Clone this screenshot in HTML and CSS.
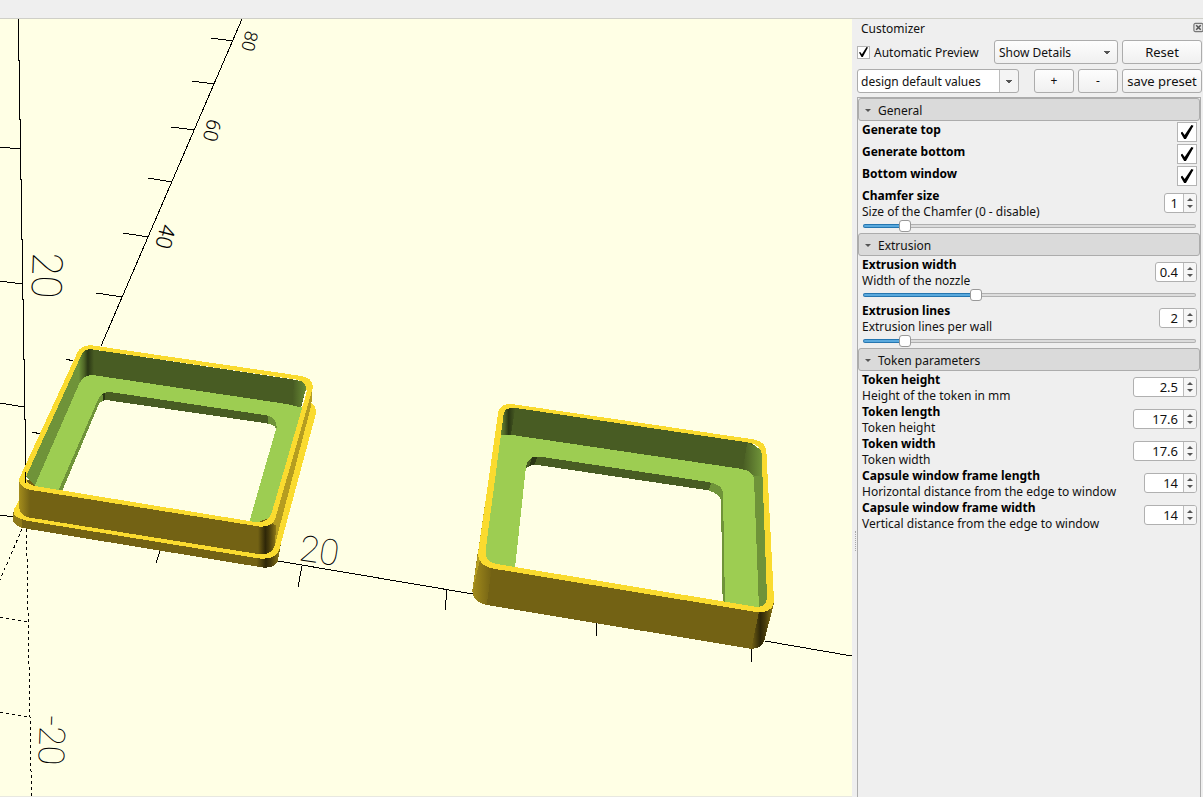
FILE: index.html
```html
<!DOCTYPE html>
<html lang="en">
<head>
<meta charset="utf-8">
<title>Customizer</title>
<link rel="stylesheet" href="styles.css">
</head>
<body>
<div class="toolbar"></div>
<div class="workspace">
  <main class="viewport">
    <svg class="scene" viewBox="0 19 852 778" preserveAspectRatio="xMinYMin slice" role="img" aria-label="3D preview">
      <defs>
        <linearGradient id="backL"><stop offset="0" stop-color="#6f9339"/><stop offset=".35" stop-color="#4f6627"/><stop offset=".6" stop-color="#2a3614"/><stop offset="1" stop-color="#485c23"/></linearGradient>
        <linearGradient id="backR"><stop offset="0" stop-color="#485c23"/><stop offset="1" stop-color="#6f9339"/></linearGradient>
        <linearGradient id="frontL"><stop offset="0" stop-color="#a38c1c"/><stop offset="1" stop-color="#736214"/></linearGradient>
        <linearGradient id="frontR"><stop offset="0" stop-color="#736214"/><stop offset=".4" stop-color="#2e2708"/><stop offset=".6" stop-color="#463b0c"/><stop offset="1" stop-color="#8f7a18"/></linearGradient>
      </defs>

      <g class="axes">
        <path d="M18.500 19V60L19.500 61V119L20.500 120V179L21.500 180V239L22.500 240V299L23.500 300V359L24.500 360V419L25.500 420V482"/>
        <path d="M242 19L101 346M278 561L473 594M765 641L852 656"/>
        <path d="M0 147L20 149M0 281L22 284M0 403L24 407M0 515L13 517"/>
        <path d="M211 38L233 41M192 81L214 84M171 127L195 130M148 178L172 182M123 233L148 237M96 293L122 297M66 359L73 361M32 432L41 434"/>
        <path d="M160 551L156 563M302 566L298 587M447 590L445 610M596.500 623V636M751.500 648V662"/>
        <path class="dashed" d="M26.500 529L31.500 797M22 529L0 580M0 617L27 622M0 712L29 717"/>
      </g>
      <g class="ticks">
        <text font-size="36" transform="translate(298 560) rotate(9)">20</text>
        <text font-size="42" transform="translate(33 252) rotate(92)">20</text>
        <text font-size="36" transform="translate(40 715) rotate(92)">-20</text>
        <text class="far" font-size="22" transform="translate(161 223) rotate(104)">40</text>
        <text class="far" font-size="20" transform="translate(208 118) rotate(104)">60</text>
        <text class="far" font-size="18" transform="translate(246 30) rotate(104)">80</text>
      </g>

      <!-- capsule top -->
      <g transform="translate(0 330) scale(.33333)" shape-rendering="crispEdges">
        <path fill="#736214" d="M40 545V575Q52 592 85 597L785 712Q822 717 833 695L845 630L800 300L100 500Z"/>
        <path fill="#8f7a18" d="M40 550V575Q48 588 66 594V562Z"/>
        <path fill="url(#frontR)" d="M770 684L839 655L833 695Q822 717 785 712L770 710Z"/>
        <path fill="#fadb2f" d="M60 505L42 538Q34 562 80 572L775 685Q828 692 839 655L948 250Q948 225 932 218L850 260L100 480Z"/>
        <path fill="#736214" d="M58 455V535Q62 558 90 563L780 673Q816 675 822 645L826 570L800 300Z"/>
        <path fill="url(#frontL)" d="M58 455V535Q62 558 90 563V465Z"/>
        <path fill="#b59d20" d="M820 570L938 165L934 225L824 648Z"/>
        <path fill="url(#frontR)" d="M774 585H829L824 648Q816 676 774 672Z"/>
        <path fill="#6f9339" d="M240 75L78 440L105 468L290 140V60Z"/>
        <path fill="#485c23" d="M250 57L275 58L890 150L922 160L903 235L285 140L245 150Z"/>
        <path fill="url(#backL)" d="M236 85L254 57H282V142L236 154Z"/>
        <path fill="url(#backR)" d="M882 149L925 158L900 235L878 226Z"/>
        <path fill="#9dcd52" d="M236 165Q250 131 285 136L860 222L907 233L818 560L765 580L102 472Z"/>
        <path fill="#485c23" d="M288 225Q300 183 330 186L800 256Q834 264 829 297L800 290L320 225Z"/>
        <path fill="#2a3614" d="M305 195L316 187V211L305 213Z"/>
        <path fill="#6f9339" d="M298 200L176 480L190 484L310 210V192ZM804 257Q834 264 829 300L804 284Z"/>
        <path fill="#ffffe5" d="M294 228Q304 207 325 211L800 280Q828 286 828 297L748 575L187 482Z"/>
        <path fill="#fadb2f" fill-rule="evenodd" d="M232 68Q244 44 275 46L905 138Q942 146 938 175L827 562Q818 592 780 590L100 481Q54 474 58 445ZM244 76L79 438Q76 462 105 468L765 576Q808 580 816 545L919 190Q925 156 890 149L275 58Q252 56 244 76Z"/>
      </g>
      <path d="M25.500 472V483" stroke="#000"/>

      <!-- capsule bottom -->
      <g transform="translate(460 390) scale(.33333)" shape-rendering="crispEdges">
        <path fill="#736214" d="M53 490L37 600Q38 637 80 645L870 776Q900 778 912 755L942 640L500 500Z"/>
        <path fill="url(#frontL)" d="M53 490L37 600Q38 637 80 645L96 530Z"/>
        <path fill="#b59d20" d="M115 65L53 495L37 605L60 510Z"/>
        <path fill="url(#frontR)" d="M898 660L874 776Q900 778 912 755L942 640Z"/>
        <path fill="#485c23" d="M123 70L165 50L880 155L885 260L150 137L118 145Z"/>
        <path fill="url(#backL)" d="M122 80L140 54H166L152 137L116 145Z"/>
        <path fill="#6f9339" d="M882 165L908 185L925 655H890L878 250Z"/>
        <path fill="url(#backR)" d="M862 157L904 180L903 260L880 256L848 238Z"/>
        <path fill="#9dcd52" d="M118 137L150 134L840 236Q880 243 882 265L897 655L70 520Z"/>
        <path fill="#485c23" d="M198 240Q197 200 240 200L745 276Q786 285 789 310V340L240 235Z"/>
        <path fill="#2a3614" d="M216 202H232L222 226L208 228Z"/>
        <path fill="#6f9339" d="M755 278Q786 287 789 306L795 640H785L782 335L745 302Z"/>
        <path fill="#ffffe5" d="M197 238Q207 221 240 226L745 301Q781 312 783 332L788 638L165 535Z"/>
        <path fill="#fadb2f" fill-rule="evenodd" d="M115 65Q123 40 155 42L880 148Q916 156 919 182L942 630Q941 667 895 667L100 536Q55 527 54 490ZM131 72L77 480Q74 514 105 521L885 650Q921 654 921 620L905 192Q902 165 868 158L168 54Q134 51 131 72Z"/>
      </g>
    </svg>
  </main>

  <aside class="dock">
    <header class="dock-title">
      <h1>Customizer</h1>
      <button class="close" aria-label="Close">
        <svg viewBox="0 0 11 11" width="11" height="11"><rect x="1" y="1" width="10" height="9" rx="1.500" fill="#e4e4e4" stroke="#777" stroke-width="1.300"/><path d="M3.500 3L8.500 8M8.500 3L3.500 8" stroke="#555" stroke-width="1.700"/></svg>
      </button>
    </header>
    <div class="bar bar-options">
      <label class="auto"><input class="check small" type="checkbox" checked><span>Automatic Preview</span></label>
      <select class="button detail" aria-label="Detail level"><option>Show Details</option></select>
      <button class="button wide">Reset</button>
    </div>
    <div class="bar">
      <select class="button preset" aria-label="Preset"><option>design default values</option></select>
      <span class="spacer"></span>
      <button class="button">+</button>
      <button class="button">-</button>
      <button class="button wide">save preset</button>
    </div>

    <div class="panel">
      <section>
        <h2><button class="group">General</button></h2>
        <div class="row toggle"><label class="name" for="gt">Generate top</label><input class="check" id="gt" type="checkbox" checked></div>
        <div class="row toggle"><label class="name" for="gb">Generate bottom</label><input class="check" id="gb" type="checkbox" checked></div>
        <div class="row toggle"><label class="name" for="bw">Bottom window</label><input class="check" id="bw" type="checkbox" checked></div>
        <div class="row">
          <label for="cs"><span class="name">Chamfer size</span><span class="desc">Size of the Chamfer (0 - disable)</span></label>
          <span class="spin w1"><input id="cs" type="text" value="1"><span class="steps"><button class="up" aria-label="Increase"></button><button class="down" aria-label="Decrease"></button></span></span>
        </div>
        <input class="slider" type="range" min="0" max="9" value="1" aria-label="Chamfer size" style="--fill:12%">
      </section>
      <section>
        <h2><button class="group">Extrusion</button></h2>
        <div class="row">
          <label for="ew"><span class="name">Extrusion width</span><span class="desc">Width of the nozzle</span></label>
          <span class="spin w3"><input id="ew" type="text" value="0.4"><span class="steps"><button class="up" aria-label="Increase"></button><button class="down" aria-label="Decrease"></button></span></span>
        </div>
        <input class="slider" type="range" min="0.1" max="1" step="0.1" value="0.4" aria-label="Extrusion width" style="--fill:34%">
        <div class="row">
          <label for="el"><span class="name">Extrusion lines</span><span class="desc">Extrusion lines per wall</span></label>
          <span class="spin w2"><input id="el" type="text" value="2"><span class="steps"><button class="up" aria-label="Increase"></button><button class="down" aria-label="Decrease"></button></span></span>
        </div>
        <input class="slider" type="range" min="1" max="10" value="2" aria-label="Extrusion lines" style="--fill:12%">
      </section>
      <section>
        <h2><button class="group">Token parameters</button></h2>
        <div class="row">
          <label for="th"><span class="name">Token height</span><span class="desc">Height of the token in mm</span></label>
          <span class="spin w5"><input id="th" type="text" value="2.5"><span class="steps"><button class="up" aria-label="Increase"></button><button class="down" aria-label="Decrease"></button></span></span>
        </div>
        <div class="row">
          <label for="tl"><span class="name">Token length</span><span class="desc">Token height</span></label>
          <span class="spin w5"><input id="tl" type="text" value="17.6"><span class="steps"><button class="up" aria-label="Increase"></button><button class="down" aria-label="Decrease"></button></span></span>
        </div>
        <div class="row">
          <label for="tw"><span class="name">Token width</span><span class="desc">Token width</span></label>
          <span class="spin w5"><input id="tw" type="text" value="17.6"><span class="steps"><button class="up" aria-label="Increase"></button><button class="down" aria-label="Decrease"></button></span></span>
        </div>
        <div class="row">
          <label for="cl"><span class="name">Capsule window frame length</span><span class="desc">Horizontal distance from the edge to window</span></label>
          <span class="spin w4"><input id="cl" type="text" value="14"><span class="steps"><button class="up" aria-label="Increase"></button><button class="down" aria-label="Decrease"></button></span></span>
        </div>
        <div class="row">
          <label for="cw"><span class="name">Capsule window frame width</span><span class="desc">Vertical distance from the edge to window</span></label>
          <span class="spin w4"><input id="cw" type="text" value="14"><span class="steps"><button class="up" aria-label="Increase"></button><button class="down" aria-label="Decrease"></button></span></span>
        </div>
      </section>
    </div>
  </aside>
</div>
</body>
</html>
```
FILE: styles.css
```css
* { box-sizing: border-box; }

body {
  margin: 0;
  height: 100vh;
  display: flex;
  flex-direction: column;
  overflow: hidden;
  background: #efefef;
  color: #111;
  font: 12px/16px "Noto Sans", "Open Sans", sans-serif;
}

h1, h2 { margin: 0; font: inherit; }
button, input, select { font: inherit; color: inherit; margin: 0; }

.toolbar { flex: none; height: 19px; border-bottom: 1px solid #cfcfc8; }
.workspace { flex: 1; min-height: 0; display: flex; }
.viewport { flex: 1; min-width: 0; overflow: hidden; background: #ffffe5; border-bottom: 1px solid #e8e8e0; }
.scene { display: block; width: 100%; height: 100%; }
.axes { fill: none; stroke: #000; stroke-width: 1; shape-rendering: crispEdges; }
.dashed { stroke-dasharray: 3 3; }
.ticks { font-family: Roboto, "Liberation Sans", sans-serif; font-weight: 100; fill: #000; }
.far { font-weight: 300; }

.dock {
  flex: none;
  width: 351px;
  padding: 0 1px 0 5px;
  display: flex;
  flex-direction: column;
  background: #efefef;
  position: relative;
}
/* splitter grip */
.dock::before {
  content: "";
  position: absolute;
  left: 3px;
  top: 512px;
  height: 20px;
  border-left: 1px dotted #aaa;
}

.dock-title { display: flex; justify-content: space-between; align-items: center; height: 18px; padding-left: 4px; margin-right: -1px; }
.dock-title h1 { padding-top: 2px; }
.close { display: flex; padding: 0 0 2px; border: 0; background: none; width: 10px; overflow: hidden; }

.bar { display: flex; align-items: center; gap: 4px; height: 24px; margin-bottom: 4px; }
.bar-options { margin-top: 3px; margin-bottom: 5px; }
.auto { flex: 1; display: flex; align-items: center; gap: 4px; white-space: nowrap; }
.auto span { padding-top: 2px; }
.spacer { flex: 1; }

.button {
  width: 40px;
  height: 24px;
  padding: 0;
  border: 1px solid #acacac;
  border-radius: 3px;
  background: linear-gradient(#fdfdfd, #f0f0f0);
  text-align: center;
  white-space: nowrap;
}
.button.wide { width: 80px; font-size: 13px; }
select.button { appearance: none; text-align: left; padding-top: 2px; }
select.button.detail {
  width: 124px;
  padding-left: 4px;
  background:
    linear-gradient(45deg, transparent 50%, #555 50%) 108px 10px / 4px 3px no-repeat,
    linear-gradient(-45deg, transparent 50%, #555 50%) 112px 10px / 4px 3px no-repeat,
    linear-gradient(#fdfdfd, #f0f0f0);
}
select.button.preset {
  width: 162px;
  padding-left: 3px;
  background:
    linear-gradient(45deg, transparent 50%, #555 50%) 147px 10px / 4px 3px no-repeat,
    linear-gradient(-45deg, transparent 50%, #555 50%) 151px 10px / 4px 3px no-repeat,
    linear-gradient(90deg, #fff 141px, #bcbcbc 141px, #bcbcbc 142px, #f4f4f4 142px);
}

.check {
  flex: none;
  appearance: none;
  width: 20px;
  height: 20px;
  border: 1px solid #b4b4b4;
  background: #fff;
  display: grid;
  place-items: center;
}
.check:checked::before {
  content: "";
  width: 13px;
  height: 14px;
  background: #000;
  clip-path: polygon(0 56%, 14% 49%, 32% 72%, 84% 0, 100% 6%, 42% 100%, 28% 100%);
}
.check.small { width: 13px; height: 13px; }
.check.small:checked::before { width: 9px; height: 10px; }

.panel { flex: 1; min-height: 0; border: 1px solid #acacac; border-bottom: 0; margin-right: 1px; }
.group {
  display: flex;
  align-items: center;
  gap: 7px;
  width: 100%;
  height: 23px;
  padding: 2px 6px 0;
  border: 1px solid #acacac;
  border-radius: 3px;
  background: #dadada;
}
.group::before { content: ""; border: solid transparent; border-width: 3px 3px 0; border-top-color: #555; }

.row { display: flex; justify-content: space-between; align-items: center; height: 32px; padding: 0 3px 0 4px; white-space: nowrap; }
.row label { padding-top: 2px; }
.row.toggle { height: 22px; align-items: flex-start; padding-top: 1px; }
.row.toggle label { padding-top: 0; }
.name, .desc { display: block; }
.name { font-weight: 700; color: #000; }

.spin { display: flex; height: 20px; border: 1px solid #b0b0b0; border-radius: 3px; background: #fff; overflow: hidden; }
.spin input { flex: 1; min-width: 0; padding: 0 5px 0 0; border: 0; background: none; text-align: right; outline: 0; font-size: 13px; }
.w1 { width: 33px; }
.w2 { width: 38px; }
.w3 { width: 42px; }
.w4 { width: 53px; }
.w5 { width: 64px; }
.steps { flex: none; width: 13px; border-left: 1px solid #bcbcbc; background: #f6f6f6; display: flex; flex-direction: column; align-items: center; justify-content: center; gap: 4px; }
.steps button { width: 0; height: 0; padding: 0; border: solid transparent; background: none; }
.steps .up { border-width: 0 3px 3px; border-bottom-color: #555; }
.steps .down { border-width: 3px 3px 0; border-top-color: #555; }

.slider {
  appearance: none;
  display: block;
  width: calc(100% - 9px);
  height: 13px;
  margin: 0 4px 1px 5px;
  background: none;
}
.slider::-webkit-slider-runnable-track {
  height: 4px;
  border: 1px solid transparent;
  border-radius: 2px;
  background:
    linear-gradient(90deg, #5aa9dd var(--fill), #dcdcdc var(--fill)) padding-box,
    linear-gradient(90deg, #2676b0 var(--fill), #b0b0b0 var(--fill)) border-box;
}
.slider::-webkit-slider-thumb {
  appearance: none;
  width: 12px;
  height: 12px;
  margin-top: -5px;
  border: 1px solid #999;
  border-radius: 3px;
  background: #fff;
}
```
